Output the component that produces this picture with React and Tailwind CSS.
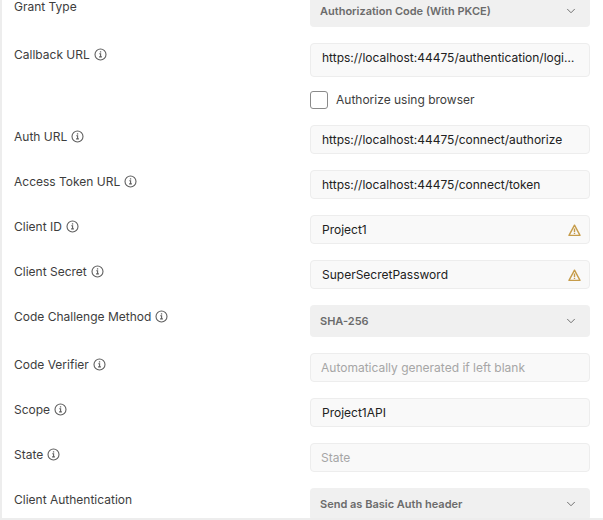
import { ChevronDown } from 'lucide-react'

const InfoIcon = () => (
  <svg width="13" height="13" viewBox="0 0 13 13" fill="none" stroke="#5f5f5f" strokeWidth="1.1" className="shrink-0 mt-[-2px]">
    <circle cx="6.5" cy="6.5" r="5.5" />
    <path d="M5.3 5.7h1.3v3M5.1 8.9h2.8" />
    <path d="M5.9 3.3h1.3v1.2H5.9z" fill="#5f5f5f" stroke="none" />
  </svg>
)

const WarningIcon = () => (
  <svg width="13" height="13" viewBox="0 0 13 13" fill="none" className="absolute right-[8px] top-[8px]">
    <path d="M6.5 1.2 12 11.4H1z" stroke="#c69c4a" strokeWidth="1.4" strokeLinejoin="round" />
    <path d="M5.8 4.4h1.4v3.7H5.8zM5.8 8.8h1.4v1.3H5.8z" fill="#c69c4a" />
  </svg>
)

const Row = ({ label, info, children }) => (
  <div className="flex items-start">
    <div className="w-[296px] shrink-0 flex items-center gap-[4px] h-[14px] mt-[5px] text-[#3d3d3d]">
      <span>{label}</span>
      {info && <InfoIcon />}
    </div>
    <div className="w-[280px] shrink-0">{children}</div>
  </div>
)

const Select = ({ value }) => (
  <div className="h-[32px] rounded-[4px] bg-[#f0f0f0] flex items-center justify-between pl-[10px] pr-[12px] text-[11px] font-semibold text-[#6b6b6b]">
    <span>{value}</span>
    <ChevronDown size={14} strokeWidth={1.5} color="#5f5f5f" />
  </div>
)

const Field = ({ value, placeholder, warn, tall }) => (
  <div
    className={`relative rounded-[4px] border border-[#ededed] bg-[#f9f9f9] flex items-center ${tall ? 'h-[34px] pb-[4px]' : 'h-[29px]'} ${placeholder ? 'pl-[10px] text-[#a6a6a6]' : 'pl-[11px] text-[#212121]'}`}
  >
    <span className={tall ? 'w-[257px] truncate' : ''}>{value || placeholder}</span>
    {warn && <WarningIcon />}
  </div>
)

export default function App() {
  return (
    <div className="h-[520px] w-[603px] overflow-hidden bg-white">
      <div
        className="h-[520px] overflow-hidden border-l-2 border-b-2 border-[#ededed] pl-[12px] text-[12px]"
        style={{ fontFamily: 'Inter, sans-serif' }}
      >
        <div className="flex flex-col gap-[16px] mt-[-5px]">
          <Row label="Grant Type">
            <Select value="Authorization Code (With PKCE)" />
          </Row>
          <div className="flex flex-col gap-[14px]">
            <Row label="Callback URL" info>
              <Field tall value="https://localhost:44475/authentication/login-callback" />
            </Row>
            <div className="flex items-center ml-[296px] gap-[8px] text-[#3d3d3d]">
              <div className="w-[18px] h-[18px] rounded-[3px] border border-[#8a8a8a] bg-white" />
              <span>Authorize using browser</span>
            </div>
          </div>
          <Row label="Auth URL" info>
            <Field value="https://localhost:44475/connect/authorize" />
          </Row>
          <Row label="Access Token URL" info>
            <Field value="https://localhost:44475/connect/token" />
          </Row>
          <Row label="Client ID" info>
            <Field value="Project1" warn />
          </Row>
          <Row label="Client Secret" info>
            <Field value="SuperSecretPassword" warn />
          </Row>
          <Row label="Code Challenge Method" info>
            <Select value="SHA-256" />
          </Row>
          <Row label="Code Verifier" info>
            <Field placeholder="Automatically generated if left blank" />
          </Row>
          <Row label="Scope" info>
            <Field value="Project1API" />
          </Row>
          <Row label="State" info>
            <Field placeholder="State" />
          </Row>
          <Row label="Client Authentication">
            <Select value="Send as Basic Auth header" />
          </Row>
        </div>
      </div>
    </div>
  )
}
